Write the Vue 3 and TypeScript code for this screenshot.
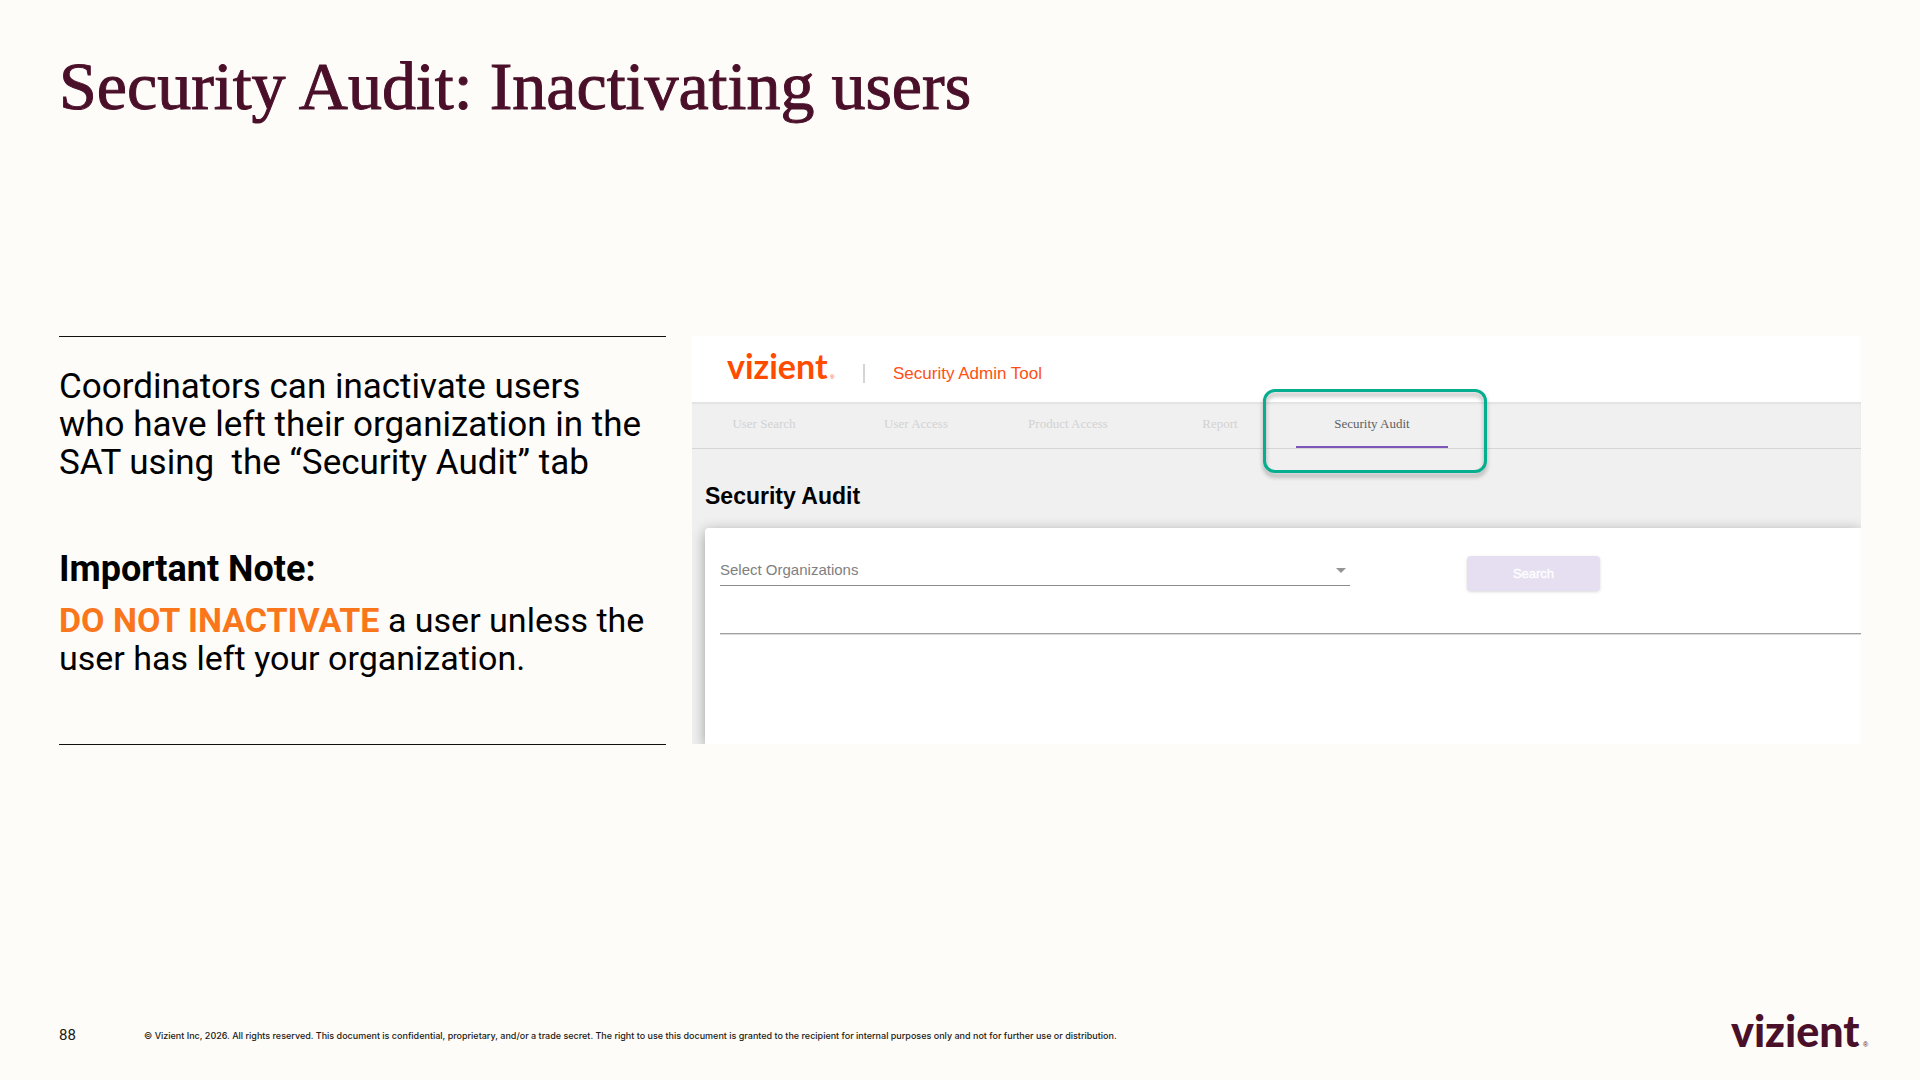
<script setup lang="ts">
import { ref } from 'vue'

const tabs: string[] = ['User Search', 'User Access', 'Product Access', 'Report', 'Security Audit']
const activeTab = 'Security Audit'
const organization = ref('')
</script>

<template>
  <div class="slide">
    <h1 class="title">Security Audit: Inactivating users</h1>

    <main class="content">
      <section class="notes">
        <p class="intro">
          Coordinators can inactivate users<br />who have left their organization in the<br />SAT using&nbsp; the “Security Audit” tab
        </p>
        <p class="note-head">Important Note:</p>
        <p class="note"><strong>DO NOT INACTIVATE</strong> a user unless the<br />user has left your organization.</p>
      </section>

      <section class="tool">
        <header class="tool-header">
          <svg class="tool-logo" width="112" height="48" viewBox="0 0 112 48" role="img" aria-label="vizient">
            <text x="0" y="36" class="tool-word">vizient</text>
            <text x="103" y="36" class="tool-reg">®</text>
          </svg>
          <span class="divider"></span>
          <span class="tool-name">Security Admin Tool</span>
        </header>

        <nav class="tabs">
          <a v-for="tab in tabs" :key="tab" href="#" class="tab" :class="{ active: tab === activeTab }">
            {{ tab }}
            <span v-if="tab === activeTab" class="callout"></span>
          </a>
        </nav>

        <div class="tool-body">
          <h2 class="tool-title">Security Audit</h2>
          <form class="card" @submit.prevent>
            <div class="search-row">
              <div class="field">
                <select v-model="organization" aria-label="Select Organizations">
                  <option value="">Select Organizations</option>
                </select>
                <svg class="caret" width="10" height="5" viewBox="0 0 10 5"><path d="M0 0h10L5 5z" fill="#949494" /></svg>
              </div>
              <button type="submit" class="search">Search</button>
            </div>
            <hr class="rule" />
          </form>
        </div>
      </section>
    </main>

    <footer class="footer">
      <span class="page-number">88</span>
      <small class="legal">© Vizient Inc, 2026. All rights reserved. This document is confidential, proprietary, and/or a trade secret. The right to use this document is granted to the recipient for internal purposes only and not for further use or distribution.</small>
      <svg class="brand" width="144" height="64" viewBox="0 0 144 64" role="img" aria-label="vizient">
        <text x="2" y="44" class="brand-word">vizient</text>
        <text x="134" y="44" class="brand-reg">®</text>
      </svg>
    </footer>
  </div>
</template>

<style>
body {
  margin: 0;
  background: #fefcf8;
}
</style>

<style scoped>
.slide {
  box-sizing: border-box;
  min-height: 100vh;
  padding: 46px 59px 13px;
  display: flex;
  flex-direction: column;
  background: #fefcf8;
  color: #000;
  font-family: Roboto, 'Liberation Sans', sans-serif;
}

.title {
  margin: 0;
  font: 400 68px/80px 'Liberation Serif', serif;
  color: #4a0f29;
  -webkit-text-stroke: 1px #4a0f29;
}

.content {
  margin-top: 210px;
  display: grid;
  grid-template-columns: 607fr 1169fr;
  align-items: start;
  gap: 26px;
}

.notes {
  padding: 31px 0 67px;
  border-top: 1px solid #14110c;
  border-bottom: 1px solid #14110c;
  font-size: 35px;
  line-height: 38px;
}

.notes p {
  margin: 0;
}

.notes .note-head {
  margin-top: 68px;
  font-size: 36px;
  font-weight: 700;
}

.notes .note {
  margin-top: 13px;
  font-size: 34px;
}

.note strong {
  color: #fa761b;
}

.tool {
  height: 408px;
  display: flex;
  flex-direction: column;
  overflow: hidden;
  background: #f0f0f0;
  font-family: 'Liberation Sans', Arial, sans-serif;
}

.tool-header {
  display: flex;
  height: 66px;
  padding-left: 35px;
  background: #fff;
}

.tool-logo {
  margin-top: 7px;
}

.tool-word {
  font: 700 34px Lato, sans-serif;
  fill: #ff4b00;
}

.tool-reg {
  font: 400 6px 'Liberation Sans', sans-serif;
  fill: #ff4b00;
}

.divider {
  width: 2px;
  height: 19px;
  margin: 28px 28px 0 24px;
  background: #d4d4d4;
}

.tool-name {
  margin-top: 28px;
  font-size: 17px;
  line-height: 20px;
  color: #ff4f14;
}

.tabs {
  display: flex;
  height: 46px;
  margin-left: -4px;
  border-bottom: 1px solid #d6d6d6;
  box-shadow: inset 0 2px 2px #e2e2e2;
}

.tab {
  position: relative;
  width: 152px;
  box-sizing: border-box;
  border-bottom: 2px solid transparent;
  text-align: center;
  text-decoration: none;
  font: 13px/44px 'Liberation Serif', 'Times New Roman', serif;
  color: #d2d2d2;
}

.tab.active {
  color: #606060;
  border-bottom-color: #7e55b8;
}

.callout {
  position: absolute;
  inset: -13px -39px -27px -33px;
  border: 3px solid #05ae8f;
  border-radius: 12px;
  filter: drop-shadow(0 4px 2px rgba(0, 0, 0, 0.3));
}

.tool-body {
  flex: 1;
  display: flex;
  flex-direction: column;
  padding: 34px 0 0 13px;
}

.tool-title {
  margin: 0 0 18px;
  font-size: 23px;
  line-height: 27px;
}

.card {
  flex: 1;
  padding: 28px 0 0 15px;
  border-radius: 4px 0 0 0;
  background: #fff;
  box-shadow: 0 3px 14px rgba(0, 0, 0, 0.35);
}

.search-row {
  display: flex;
  align-items: flex-start;
}

.field {
  position: relative;
  width: 630px;
  border-bottom: 1px solid #8c8c8c;
}

select {
  display: block;
  width: 100%;
  height: 29px;
  padding: 0 0 2px;
  border: 0;
  appearance: none;
  background: transparent;
  font: 15px 'Liberation Sans', Arial, sans-serif;
  color: #808080;
}

.caret {
  position: absolute;
  right: 4px;
  top: 12px;
}

.search {
  width: 133px;
  height: 35px;
  margin-left: 117px;
  border: 0;
  border-radius: 4px;
  background: #e6dff1;
  box-shadow: 0 1px 3px rgba(0, 0, 0, 0.15);
  color: #fff;
  font: 13px 'Liberation Sans', Arial, sans-serif;
  -webkit-text-stroke: 1px rgba(255, 255, 255, 0.4);
}

.rule {
  height: 1px;
  margin: 42px 0 0;
  border: 0;
  background: #a0a0a0;
  box-shadow: 0 1px #dcdcdc;
}

.footer {
  margin-top: auto;
  display: flex;
  align-items: center;
  color: #1c1a14;
}

.page-number {
  width: 85px;
  font-size: 15px;
}

.legal {
  font-family: Inter, sans-serif;
  font-size: 9px;
  font-weight: 500;
}

.brand {
  margin: 0 -12px 0 auto;
}

.brand-word {
  font: 900 43px Lato, sans-serif;
  fill: #4a0f29;
}

.brand-reg {
  font: 400 7px 'Liberation Sans', sans-serif;
  fill: #4a0f29;
}
</style>
